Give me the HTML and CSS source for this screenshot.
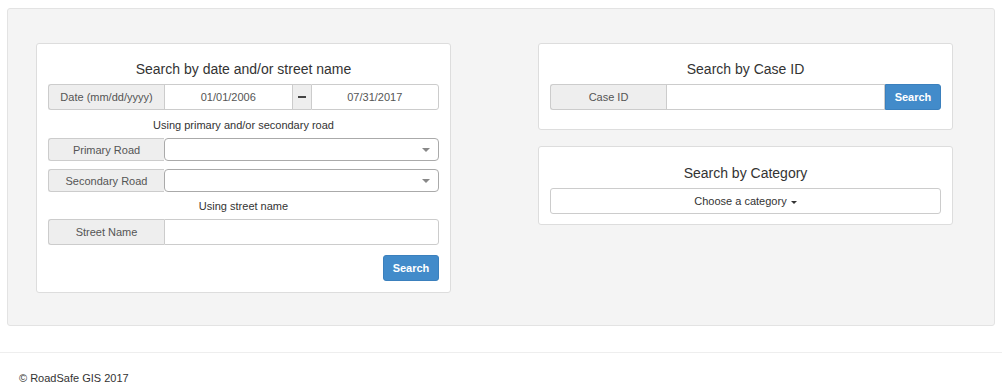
FILE: index.html
```html
<!DOCTYPE html>
<html lang="en">
<head>
    <meta charset="UTF-8">
    <title>RoadSafe GIS - Search</title>
    <link rel="stylesheet" href="styles.css">
</head>
<body>

    <div class="well">
        <div class="search-grid">

            <!-- Search by date / street -->
            <div class="panel">
                <h4>Search by date and/or street name</h4>
                <div class="input-group">
                    <span class="addon label-addon">Date (mm/dd/yyyy)</span>
                    <input type="text" class="field centered" value="01/01/2006">
                    <span class="addon minus-addon"><span class="minus"></span></span>
                    <input type="text" class="field centered" value="07/31/2017">
                </div>
                <p class="hint">Using primary and/or secondary road</p>
                <div class="input-group small">
                    <span class="addon label-addon">Primary Road</span>
                    <div class="select-box"><span class="arrow"></span></div>
                </div>
                <div class="input-group small second">
                    <span class="addon label-addon">Secondary Road</span>
                    <div class="select-box"><span class="arrow"></span></div>
                </div>
                <p class="hint street">Using street name</p>
                <div class="input-group">
                    <span class="addon label-addon">Street Name</span>
                    <input type="text" class="field">
                </div>
                <div class="actions">
                    <button class="btn-primary">Search</button>
                </div>
            </div>

            <div class="right-col">
                <!-- Search by case id -->
                <div class="panel case-panel">
                    <h4>Search by Case ID</h4>
                    <div class="input-group">
                        <span class="addon label-addon">Case ID</span>
                        <input type="text" class="field">
                        <button class="btn-primary group-btn">Search</button>
                    </div>
                </div>

                <!-- Search by category -->
                <div class="panel category-panel">
                    <h4>Search by Category</h4>
                    <button class="dropdown">Choose a category <span class="caret"></span></button>
                </div>
            </div>

        </div>
    </div>

    <footer class="footer">
        <p>&copy; RoadSafe GIS 2017</p>
    </footer>

</body>
</html>
```

FILE: styles.css
```css
/* Basic reset */
* {
    margin: 0;
    padding: 0;
    box-sizing: border-box;
}

body {
    font-family: 'Liberation Sans', Arial, sans-serif;
    font-size: 11px;
    line-height: 16px;
    color: #333;
    background: #fff;
}

.well {
    margin: 8px 7px 0;
    padding: 35px 0 32px 28px;
    background-color: #f4f4f4;
    border: 1px solid #e3e3e3;
    border-radius: 3px;
    height: 318px;
}

.search-grid {
    display: grid;
    grid-template-columns: 415px 415px;
    column-gap: 87px;
    margin-top: -1px;
}

.right-col {
    display: flex;
    flex-direction: column;
    gap: 16px;
}

.panel {
    background-color: #fff;
    border: 1px solid #ddd;
    border-radius: 3px;
    padding: 17px 11px 11px;
}

.case-panel {
    padding-bottom: 19px;
}

.category-panel {
    padding-top: 18px;
    padding-bottom: 10px;
}

.panel h4 {
    font-size: 14px;
    font-weight: normal;
    line-height: 16px;
    text-align: center;
    margin-bottom: 7px;
}

.input-group {
    display: flex;
    height: 26px;
}

.input-group.small {
    height: 23px;
}

.input-group.second {
    margin-top: 8px;
}

.addon {
    display: flex;
    align-items: center;
    justify-content: center;
    background-color: #eee;
    border: 1px solid #ccc;
    color: #555;
}

.label-addon {
    width: 116px;
    flex-shrink: 0;
    border-radius: 3px 0 0 3px;
    border-right: none;
}

.minus-addon {
    width: 18px;
    flex-shrink: 0;
    border-left: none;
    border-right: none;
}

.minus {
    width: 8px;
    height: 2px;
    background-color: #444;
}

.field {
    flex: 1;
    min-width: 0;
    border: 1px solid #ccc;
    font-family: inherit;
    font-size: 11px;
    color: #555;
    padding: 0 9px;
    outline: none;
}

.input-group > .field:last-child {
    border-radius: 0 3px 3px 0;
}

.field.centered {
    text-align: center;
}

.select-box {
    flex: 1;
    position: relative;
    border: 1px solid #aaa;
    border-radius: 4px;
    background-color: #fff;
}

.select-box .arrow {
    position: absolute;
    right: 8px;
    top: 9px;
    border-left: 4px solid transparent;
    border-right: 4px solid transparent;
    border-top: 4px solid #888;
}

.hint {
    text-align: center;
    margin: 7px 0 5px;
}

.hint.street {
    margin: 6px 0 5px;
}

.actions {
    display: flex;
    justify-content: flex-end;
    margin-top: 10px;
}

.btn-primary {
    width: 56px;
    height: 26px;
    background-color: #428bca;
    border: 1px solid #3b80bd;
    border-radius: 3px;
    color: #fff;
    font-family: inherit;
    font-size: 11px;
    font-weight: bold;
    cursor: pointer;
}

.group-btn {
    flex-shrink: 0;
    border-radius: 0 3px 3px 0;
}

.dropdown {
    width: 100%;
    height: 26px;
    background-color: #fff;
    border: 1px solid #ccc;
    border-radius: 3px;
    font-family: inherit;
    font-size: 11px;
    color: #333;
    cursor: pointer;
}

.caret {
    display: inline-block;
    vertical-align: middle;
    margin-left: 1px;
    border-left: 3px solid transparent;
    border-right: 3px solid transparent;
    border-top: 3px solid #333;
}

.footer {
    margin-top: 26px;
    border-top: 1px solid #eee;
    padding: 17px 19px 0;
}
```
